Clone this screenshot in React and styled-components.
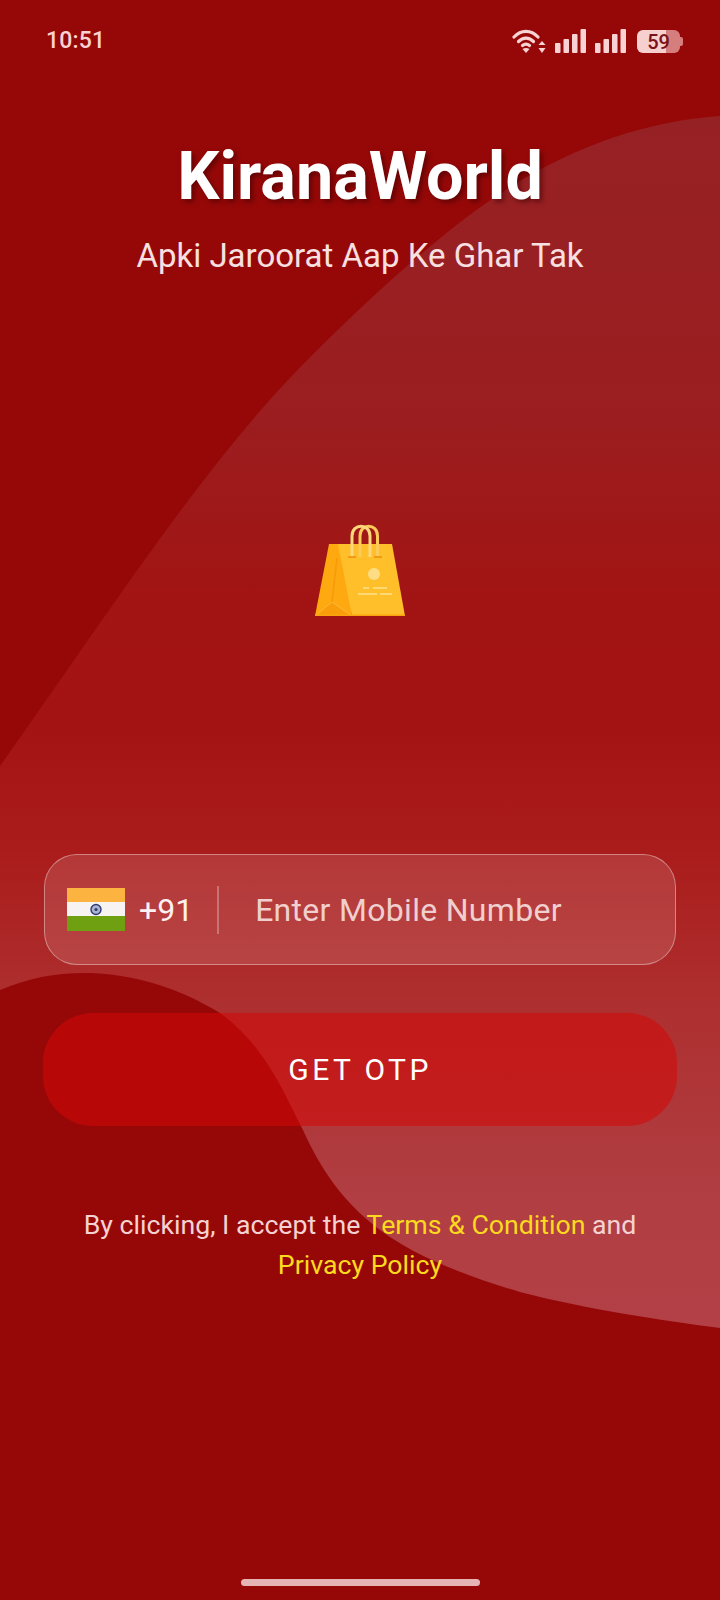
import React from "react";
import styled, { createGlobalStyle } from "styled-components";

const Global = createGlobalStyle`
  html, body { margin: 0; padding: 0; background: #960808; }
  * { box-sizing: border-box; }
`;

const Screen = styled.div`
  position: relative;
  width: 720px;
  height: 1600px;
  overflow: hidden;
  background: #960808;
  font-family: Roboto, "Liberation Sans", sans-serif;
  color: #fff;
`;

const Backdrop = styled.svg`
  position: absolute;
  inset: 0;
  width: 720px;
  height: 1600px;
`;

const Content = styled.div`
  position: relative;
  display: flex;
  flex-direction: column;
  height: 100%;
`;

const StatusBar = styled.div`
  display: flex;
  align-items: center;
  justify-content: space-between;
  height: 40px;
  margin-top: 20px;
  padding: 0 37px 0 46px;
  color: #f9d3d3;
`;

const Clock = styled.span`
  font-size: 23px;
  font-weight: 500;
  letter-spacing: 0.2px;
`;

const StatusIcons = styled.div`
  display: flex;
  align-items: center;
  gap: 9px;
  padding-top: 2px;
`;

const WifiIcon = styled.svg`
  margin-left: 2px;
`;

const Battery = styled.div`
  position: relative;
  width: 43px;
  height: 23px;
  margin: 1px 3px 0 2px;
  border-radius: 6px;
  background: linear-gradient(90deg, #f6cfcf 0 68%, #d67e7e 68% 100%);
  display: flex;
  align-items: center;
  justify-content: center;
  color: #7a1218;
  font-size: 20px;
  font-weight: 500;
  &::after {
    content: "";
    position: absolute;
    right: -3px;
    top: 7px;
    width: 3px;
    height: 9px;
    border-radius: 0 2px 2px 0;
    background: #d67e7e;
  }
`;

const Title = styled.h1`
  margin: 77px 0 0;
  text-align: center;
  font-size: 66.5px;
  line-height: 78px;
  font-weight: 700;
  text-shadow: 3px 3px 5px rgba(60, 0, 0, 0.55);
`;

const Tagline = styled.p`
  margin: 20px 0 0;
  text-align: center;
  font-size: 33px;
  line-height: 42px;
  color: #f8e0e0;
`;

const BagWrap = styled.div`
  display: flex;
  justify-content: center;
  margin-top: 247px;
`;

const PhoneField = styled.div`
  display: flex;
  align-items: center;
  height: 111px;
  margin: 238px 44px 0 44px;
  padding-left: 22px;
  border: 1.5px solid rgba(255, 255, 255, 0.38);
  border-radius: 33px;
  background: rgba(255, 255, 255, 0.12);
`;

const Code = styled.span`
  margin-left: 14px;
  font-size: 32px;
  color: #fdf0f0;
`;

const Divider = styled.span`
  width: 2px;
  height: 48px;
  margin-left: 24px;
  background: rgba(255, 255, 255, 0.28);
`;

const Placeholder = styled.span`
  margin-left: 36px;
  font-size: 32px;
  letter-spacing: 0.3px;
  color: #f0cfcf;
`;

const OtpButton = styled.button`
  display: block;
  height: 113px;
  margin: 48px 43px 0 43px;
  border: 0;
  border-radius: 50px;
  background: rgba(212, 8, 8, 0.55);
  color: #fff;
  font-family: inherit;
  font-size: 30px;
  letter-spacing: 3.4px;
`;

const Legal = styled.p`
  margin: 79px 0 0;
  text-align: center;
  font-size: 26.7px;
  line-height: 40px;
  color: #f5d2d2;
`;

const LegalLink = styled.span`
  color: #fbd91f;
`;

const HomeBar = styled.div`
  position: absolute;
  left: 241px;
  bottom: 14px;
  width: 239px;
  height: 7px;
  border-radius: 4px;
  background: #e6b4b4;
`;

const Wifi = () => (
  <WifiIcon width="34" height="24" viewBox="0 0 34 24" fill="none">
    <g stroke="currentColor" strokeWidth="3.2" strokeLinecap="round">
      <path d="M2 8 C 9 0.5, 19 0.5, 26 8" />
      <path d="M6.5 12.5 C 11 8, 17 8, 21.5 12.5" />
      <path d="M10.5 16.5 C 12.8 14.6, 15.2 14.6, 17.5 16.5" />
    </g>
    <path d="M14 24 L10.5 20 C12.5 18.8 15.5 18.8 17.5 20 Z" fill="currentColor" />
    <path d="M30 12 L33.5 16 H26.5 Z M30 24 L33.5 19 H26.5 Z" fill="currentColor" />
  </WifiIcon>
);

const Signal = () => (
  <svg width="31" height="24" viewBox="0 0 31 24" fill="currentColor">
    <rect x="0" y="14" width="5.5" height="10" rx="1" />
    <rect x="8.5" y="10" width="5.5" height="14" rx="1" />
    <rect x="17" y="5" width="5.5" height="19" rx="1" />
    <rect x="25.5" y="0" width="5.5" height="24" rx="1" />
  </svg>
);

const Bag = () => (
  <svg width="90" height="92" viewBox="0 0 90 92">
    <path d="M45 33 V12 C45 -1 62.5 -1 62.5 12 V33" fill="none" stroke="#fcca58" strokeWidth="3" />
    <path d="M14 20 H30 L37 92 H0 Z" fill="#fda90f" />
    <path d="M23 20 H77 L90 92 H37 Z" fill="#febf2b" />
    <path d="M0 92 L17 78 L37 92 Z" fill="#f99d0b" />
    <path d="M0 92 L17 78 L37 92" fill="none" stroke="#fdb83a" strokeWidth="1" />
    <path d="M17 78 L22 34" stroke="#f79b0a" strokeWidth="1.6" />
    <path d="M0 90.5 H90 V92 H0 Z" fill="#f9a40e" />
    <path d="M37 33 V12 C37 -1 55 -1 55 12 V33" fill="none" stroke="#fcd77c" strokeWidth="3" />
    <path d="M45 20 V33 M62.5 20 V33" fill="none" stroke="#fcca58" strokeWidth="3" />
    <rect x="33" y="32" width="8" height="2" fill="#f49a12" />
    <rect x="59" y="32" width="8" height="2" fill="#f49a12" />
    <circle cx="59" cy="50" r="6" fill="#fedd85" />
    <g fill="#fdd873">
      <rect x="48" y="63" width="6" height="2" />
      <rect x="58" y="63" width="14" height="2" />
      <rect x="43" y="69" width="19" height="2" />
      <rect x="65" y="69" width="12" height="2" />
    </g>
  </svg>
);

const IndiaFlag = () => (
  <svg width="58" height="43" viewBox="0 0 58 43">
    <rect width="58" height="15" fill="#fdb33f" />
    <rect y="14" width="58" height="15" fill="#f6f3f2" />
    <rect y="28" width="58" height="15" fill="#6fa012" />
    <circle cx="29" cy="21.5" r="5" fill="#aab3d0" stroke="#2f3a78" strokeWidth="1.4" />
    <circle cx="29" cy="21.5" r="1.6" fill="#2f3a78" />
  </svg>
);

export default function App() {
  return (
    <Screen>
      <Global />
      <Backdrop viewBox="0 0 720 1600">
        <defs>
          <linearGradient id="sheet" x1="0" y1="116" x2="0" y2="1330" gradientUnits="userSpaceOnUse">
            <stop offset="0" stopColor="#962124" />
            <stop offset="0.235" stopColor="#9b1e20" />
            <stop offset="0.4" stopColor="#a21413" />
            <stop offset="0.5" stopColor="#a41313" />
            <stop offset="0.605" stopColor="#aa1c1b" />
            <stop offset="0.73" stopColor="#ae2f2f" />
            <stop offset="0.89" stopColor="#b03e42" />
            <stop offset="1" stopColor="#b24046" />
          </linearGradient>
        </defs>
        <path
          fill="url(#sheet)"
          d="M720 116 C 640 122, 560 150, 482 206 C 410 258, 330 335, 275 394 C 180 500, 90 640, 0 766
             V 990 C 30 977, 60 972, 92 973 C 150 976, 190 995, 220 1013
             C 265 1045, 285 1095, 303 1130 C 322 1172, 342 1198, 370 1222
             C 410 1256, 470 1277, 520 1292 C 590 1310, 660 1320, 720 1328 Z"
        />
      </Backdrop>
      <Content>
        <StatusBar>
          <Clock>10:51</Clock>
          <StatusIcons>
            <Wifi />
            <Signal />
            <Signal />
            <Battery>59</Battery>
          </StatusIcons>
        </StatusBar>
        <Title>KiranaWorld</Title>
        <Tagline>Apki Jaroorat Aap Ke Ghar Tak</Tagline>
        <BagWrap>
          <Bag />
        </BagWrap>
        <PhoneField>
          <IndiaFlag />
          <Code>+91</Code>
          <Divider />
          <Placeholder>Enter Mobile Number</Placeholder>
        </PhoneField>
        <OtpButton>GET OTP</OtpButton>
        <Legal>
          By clicking, I accept the <LegalLink>Terms &amp; Condition</LegalLink> and
          <br />
          <LegalLink>Privacy Policy</LegalLink>
        </Legal>
      </Content>
      <HomeBar />
    </Screen>
  );
}
